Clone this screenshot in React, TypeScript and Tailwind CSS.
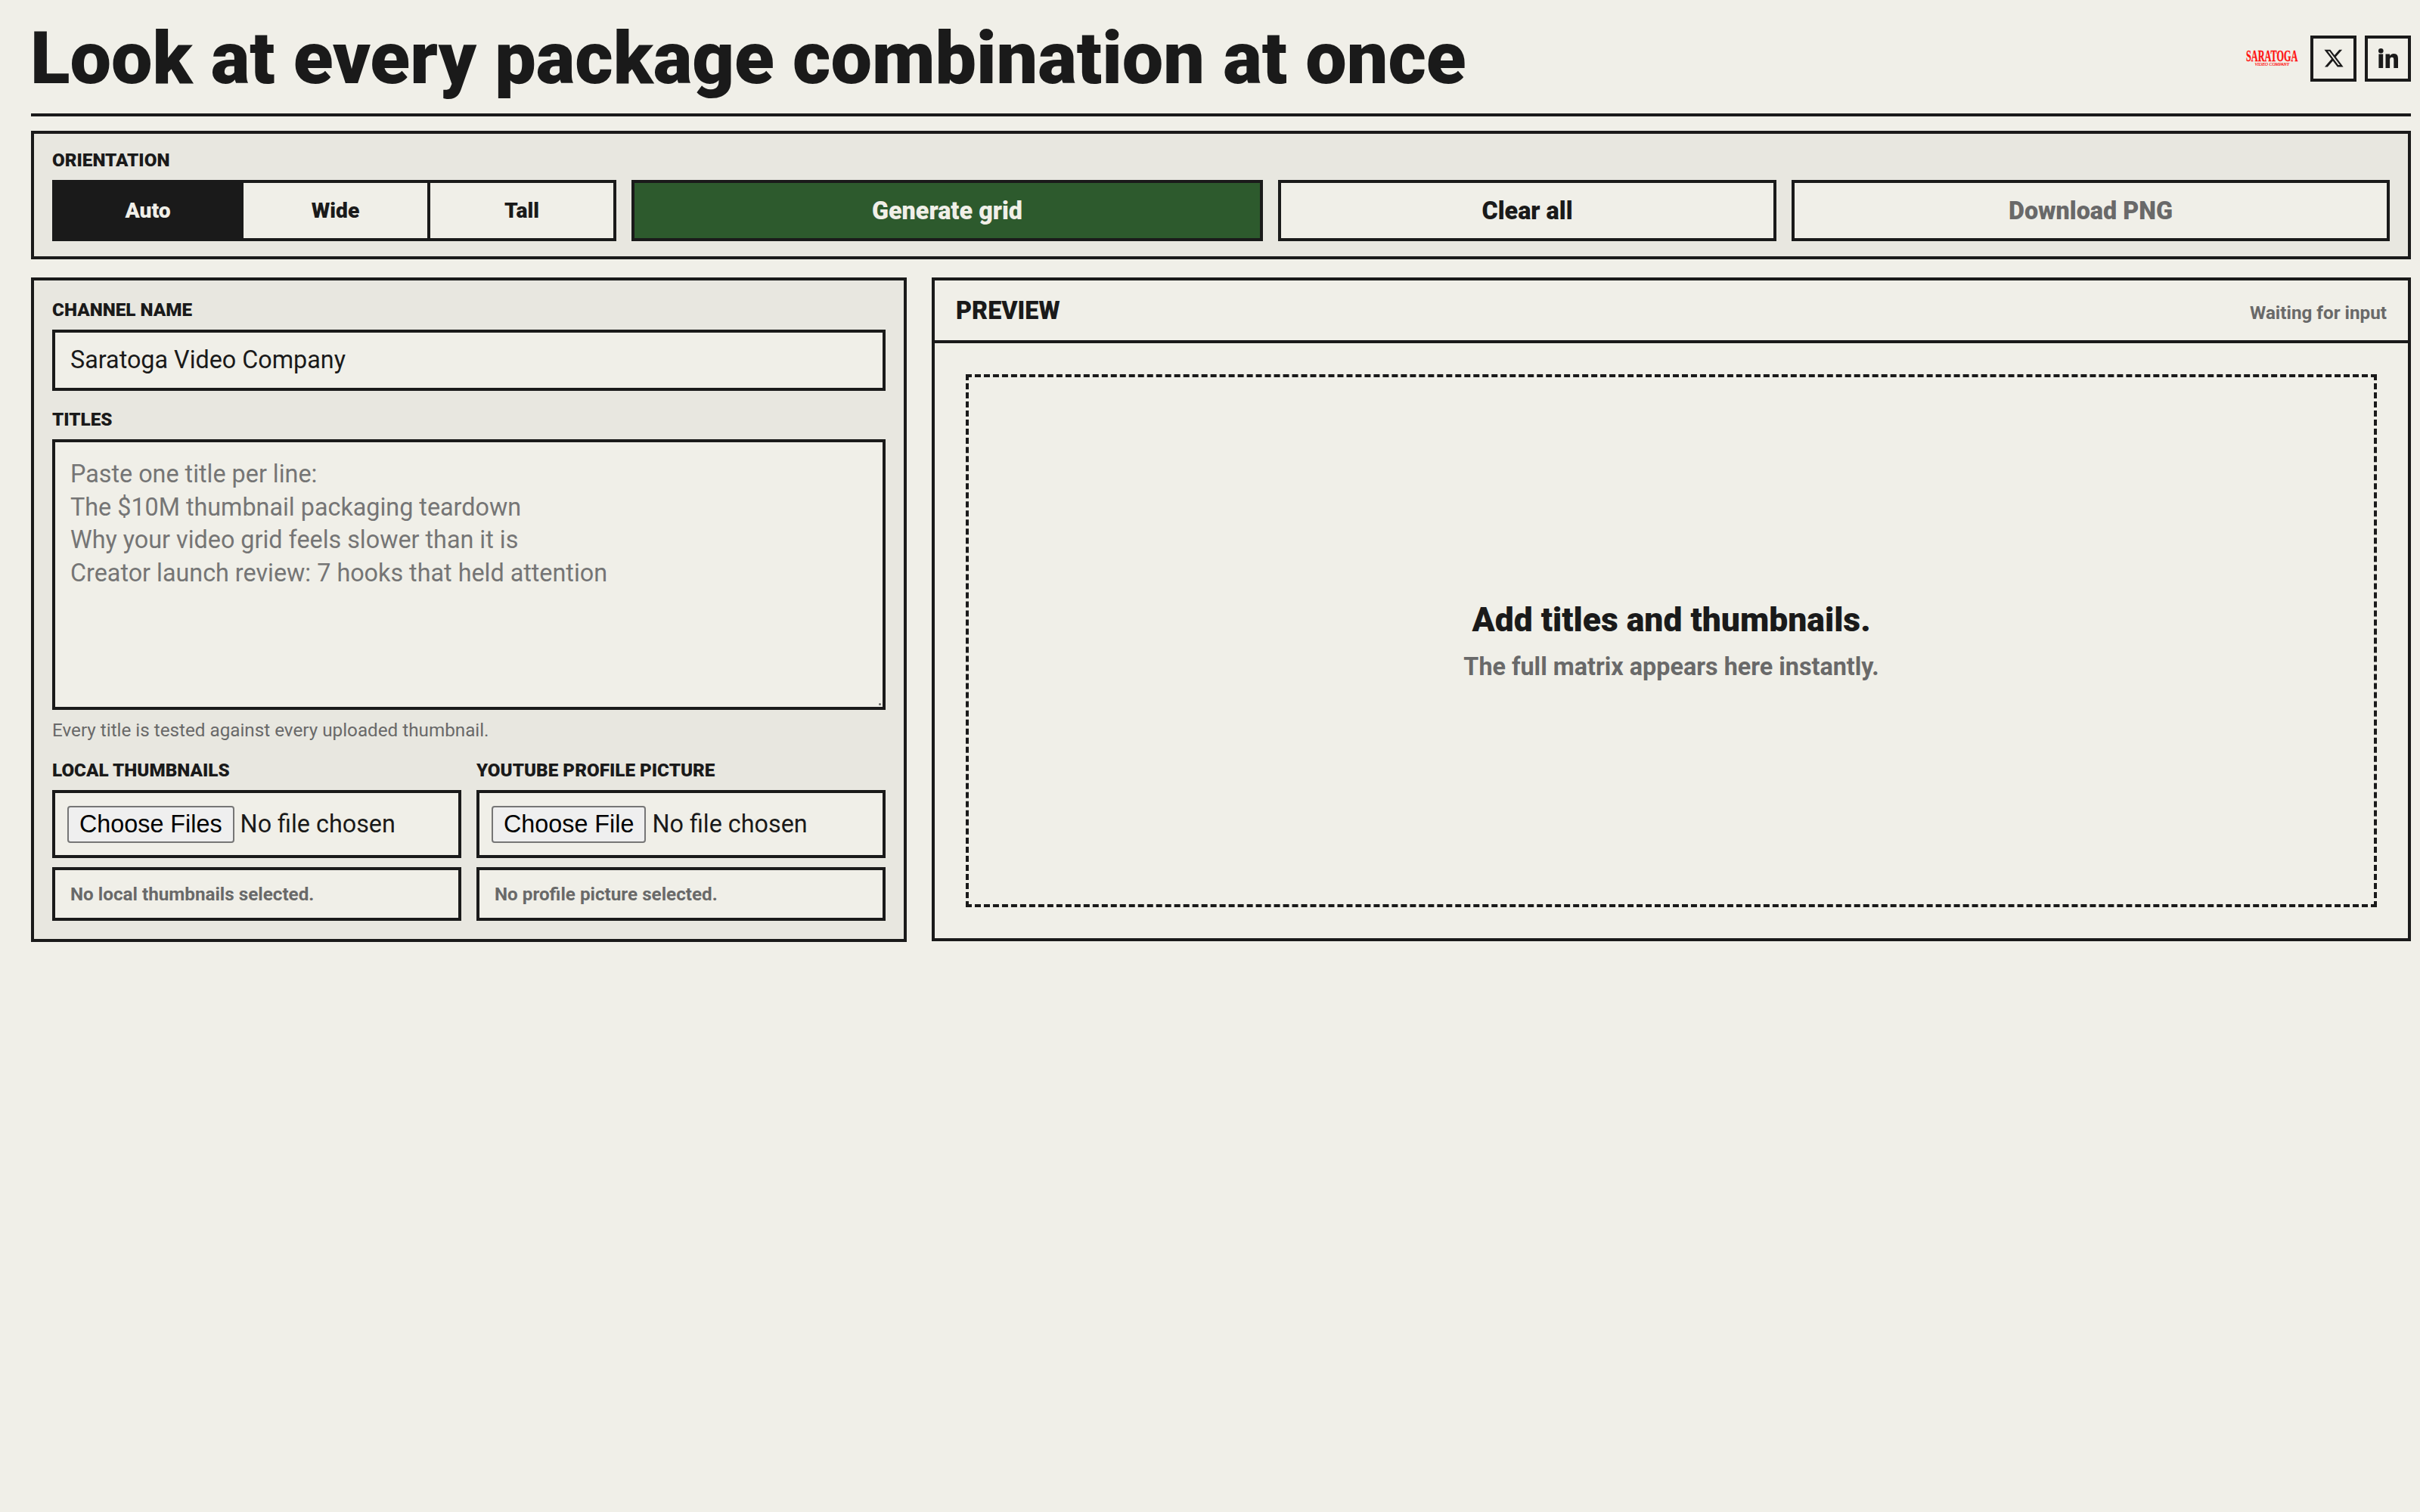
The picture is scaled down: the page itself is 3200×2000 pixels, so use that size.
import React, { useState } from 'react'
import { clsx } from 'clsx'

type Orientation = 'auto' | 'wide' | 'tall'

const orientations: { id: Orientation; label: string }[] = [
  { id: 'auto', label: 'Auto' },
  { id: 'wide', label: 'Wide' },
  { id: 'tall', label: 'Tall' },
]

const titlesPlaceholder = [
  'Paste one title per line:',
  'The $10M thumbnail packaging teardown',
  'Why your video grid feels slower than it is',
  'Creator launch review: 7 hooks that held attention',
].join('\n')

function FieldLabel({ children, htmlFor }: { children: React.ReactNode; htmlFor?: string }) {
  return (
    <label htmlFor={htmlFor} className="block text-[24.24px] leading-[31px] font-black uppercase">
      {children}
    </label>
  )
}

function SaratogaLogo() {
  return (
    <svg viewBox="0 0 74 30" className="h-[30px] w-[74px] overflow-visible" fill="#ff1010">
      <text
        x="0"
        y="19.2"
        textLength="68.5"
        lengthAdjust="spacingAndGlyphs"
        fontFamily="Liberation Serif, serif"
        fontWeight="700"
        fontSize="20"
        stroke="#ff1010"
        strokeWidth="0.3"
      >
        SARATOGA
      </text>
      <text
        x="11.5"
        y="24.7"
        textLength="45.5"
        lengthAdjust="spacingAndGlyphs"
        fontFamily="Liberation Serif, serif"
        fontStyle="italic"
        fontSize="6.4"
        stroke="#ff1010"
        strokeWidth="0.2"
      >
        VIDEO COMPANY
      </text>
    </svg>
  )
}

function SocialLink({ label, children }: { label: string; children: React.ReactNode }) {
  return (
    <a
      href="#"
      aria-label={label}
      className="flex size-[61px] items-center justify-center border-4 border-[#1a1a1a]"
    >
      {children}
    </a>
  )
}

interface FilePickerProps {
  id: string
  label: string
  status: string
  multiple?: boolean
}

function FilePicker({ id, label, status, multiple }: FilePickerProps) {
  return (
    <div>
      <FieldLabel htmlFor={id}>{label}</FieldLabel>
      <input
        id={id}
        type="file"
        multiple={multiple}
        className="mt-[10px] block h-[90px] w-full border-4 border-[#1a1a1a] bg-[#f0efe8] px-4 py-[17px] text-[32.32px] leading-[49px] file:mr-2 file:h-[49px] file:rounded-[4px] file:border-2 file:border-solid file:border-[#767676] file:bg-[#efefef] file:px-[14px] file:py-0 file:font-['Liberation_Sans'] file:text-[32.32px] file:leading-[45px] file:font-normal file:text-black"
      />
      <div className="mt-[12px] flex h-[71px] items-center border-4 border-[#1a1a1a] bg-[#f0efe8] px-[20px] pt-[2px] text-[24.24px] font-bold text-[#696969]">
        {status}
      </div>
    </div>
  )
}

export default function App() {
  const [orientation, setOrientation] = useState<Orientation>('auto')
  const [channel, setChannel] = useState('Saratoga Video Company')
  const [titles, setTitles] = useState('')

  return (
    <div className="h-[2000px] w-[3200px] overflow-hidden bg-[#f0efe8] pr-[12px] pl-[41px] font-['Roboto',sans-serif] text-[#1a1a1a]">
      {/* Header */}
      <header className="flex h-[154px] items-center justify-between border-b-4 border-[#1a1a1a] pt-[4px]">
        <h1 className="-ml-px text-[96.96px] leading-[98px] font-black">Look at every package combination at once</h1>
        <div className="flex items-center gap-[11px]">
          <SaratogaLogo />
          <SocialLink label="X">
            <svg viewBox="0 0 24 24" className="size-[28px]" fill="currentColor">
              <path d="M18.244 2.25h3.308l-7.227 8.26 8.502 11.24H16.17l-5.214-6.817L4.99 21.75H1.68l7.73-8.835L1.254 2.25H8.08l4.713 6.231zm-1.161 17.52h1.833L7.084 4.126H5.117z" />
            </svg>
          </SocialLink>
          <SocialLink label="LinkedIn">
            <svg viewBox="0 0 26 26" className="size-[26px]" fill="currentColor">
              <circle cx="3.3" cy="3.3" r="3.3" />
              <path d="M.4 7.5h5.8V26H.4zM9.5 7.5H15v2.6c.8-1.6 2.8-3 5.4-3 4.6 0 5.6 3 5.6 7V26h-5.7V15.5c0-2-.3-3.700-2.400-3.700s-2.800 1.600-2.800 3.700V26H9.500z" />
            </svg>
          </SocialLink>
        </div>
      </header>

      {/* Toolbar */}
      <section className="mt-[19px] flex h-[170px] items-end gap-[20px] border-4 border-[#1a1a1a] bg-[#e8e7e0] px-[24px] pb-[20px]">
        <div className="w-[746px]">
          <FieldLabel>Orientation</FieldLabel>
          <div className="mt-[10px] grid h-[81px] grid-cols-[249px_247px_1fr] border-4 border-[#1a1a1a] bg-[#f0efe8]">
            {orientations.map((o, i) => (
              <button
                key={o.id}
                type="button"
                onClick={() => setOrientation(o.id)}
                className={clsx(
                  'pt-[2px] text-[28.28px] font-black',
                  i < orientations.length - 1 && 'border-r-4 border-[#1a1a1a]',
                  orientation === o.id && 'bg-[#1a1a1a] text-[#f0efe8]'
                )}
              >
                {o.label}
              </button>
            ))}
          </div>
        </div>
        <button
          type="button"
          className="h-[81px] w-[835px] border-4 border-[#1a1a1a] bg-[#2d5a2d] pt-[2px] text-[32.32px] font-black text-[#f0efe8]"
        >
          Generate grid
        </button>
        <button
          type="button"
          className="h-[81px] w-[659px] border-4 border-[#1a1a1a] bg-[#f0efe8] pt-[2px] text-[32.32px] font-black"
        >
          Clear all
        </button>
        <button
          type="button"
          disabled
          className="h-[81px] flex-1 border-4 border-[#1a1a1a] bg-[#f0efe8] pt-[2px] text-[32.32px] font-black text-[#696969]"
        >
          Download PNG
        </button>
      </section>

      <main className="mt-[24px] flex items-start gap-[33px]">
        {/* Inputs */}
        <section className="h-[879px] w-[1158px] border-4 border-[#1a1a1a] bg-[#e8e7e0] px-[24px] pt-[24px]">
          <FieldLabel htmlFor="channel">Channel name</FieldLabel>
          <input
            id="channel"
            value={channel}
            onChange={(e) => setChannel(e.target.value)}
            className="mt-[10px] block h-[81px] w-full border-4 border-[#1a1a1a] bg-[#f0efe8] px-[20px] pb-[2px] text-[32.32px]"
          />
          <div className="mt-[23px]">
            <FieldLabel htmlFor="titles">Titles</FieldLabel>
          </div>
          <div className="relative mt-[10px]">
            <textarea
              id="titles"
              value={titles}
              onChange={(e) => setTitles(e.target.value)}
              placeholder={titlesPlaceholder}
              className="block h-[358px] w-full resize-none border-4 border-[#1a1a1a] bg-[#f0efe8] px-[20px] py-[21px] text-[32.32px] leading-[43.63px] placeholder:text-[#757575]"
            />
            {/* Resize grip */}
            <span className="absolute right-[6px] bottom-[6px] size-[3px] rounded-full bg-[#666666]" />
          </div>
          <p className="mt-[11px] text-[24.24px] leading-[32px] text-[#696969]">
            Every title is tested against every uploaded thumbnail.
          </p>
          <div className="mt-[22px] grid grid-cols-2 gap-[20px]">
            <FilePicker id="thumbnails" label="Local thumbnails" status="No local thumbnails selected." multiple />
            <FilePicker id="avatar" label="YouTube profile picture" status="No profile picture selected." />
          </div>
        </section>

        {/* Preview */}
        <section className="flex h-[878px] flex-1 flex-col border-4 border-[#1a1a1a]">
          <div className="flex h-[83px] items-baseline justify-between border-b-4 border-[#1a1a1a] px-[28px]">
            <h2 className="text-[32.32px] leading-[80px] font-black uppercase">Preview</h2>
            <span className="text-[24.24px] font-bold text-[#696969]">Waiting for input</span>
          </div>
          <div className="flex flex-1 p-[41px]">
            <div className="flex flex-1 flex-col items-center justify-center border-4 border-dashed border-[#1a1a1a] pt-[2px]">
              <p className="text-[44.44px] leading-[54px] font-black">Add titles and thumbnails.</p>
              <p className="mt-[13px] text-[32.32px] leading-[44px] font-bold text-[#696969]">
                The full matrix appears here instantly.
              </p>
            </div>
          </div>
        </section>
      </main>
    </div>
  )
}
